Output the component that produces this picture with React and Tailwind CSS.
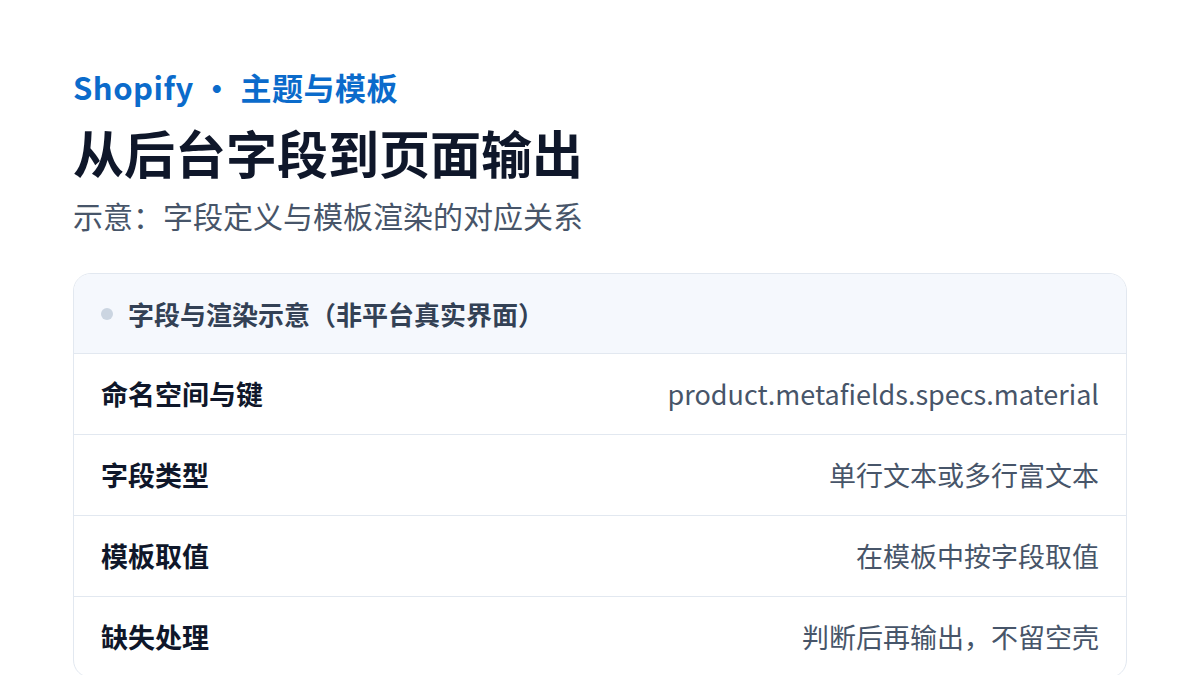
export default function App() {
  const rows = [
    ["命名空间与键", "product.metafields.specs.material"],
    ["字段类型", "单行文本或多行富文本"],
    ["模板取值", "在模板中按字段取值"],
    ["缺失处理", "判断后再输出，不留空壳"],
  ];
  return (
    <div
      className="w-[1200px] h-[675px] overflow-hidden bg-white px-[73px] pt-[64px]"
      style={{ fontFamily: '"Noto Sans CJK SC", "Noto Sans", sans-serif' }}
    >
      <div className="text-[31px] leading-[46px] font-bold text-[#0b6bcb] tracking-[0.5px]">
        Shopify · 主题与模板
      </div>
      <div className="mt-[6px] text-[51px] leading-[72px] font-bold text-[#0f172a]">
        从后台字段到页面输出
      </div>
      <div className="mt-[4px] text-[30px] leading-[46px] text-[#475569]">
        示意：字段定义与模板渲染的对应关系
      </div>
      <div className="mt-[35px] rounded-[18px] border border-[#e2e8f0] overflow-hidden">
        <div className="h-[79px] bg-[#f5f8fd] flex items-center px-[27px] gap-[15px]">
          <div className="w-[12px] h-[12px] rounded-full bg-[#cbd5e1]" />
          <div className="text-[26px] font-bold text-[#334155]">字段与渲染示意（非平台真实界面）</div>
        </div>
        {rows.map(([k, v]) => (
          <div key={k} className="h-[81px] border-t border-[#e2e8f0] flex items-center justify-between px-[27px]">
            <div className="text-[27px] font-bold text-[#0f172a]">{k}</div>
            <div className="text-[27px] text-[#475569]">{v}</div>
          </div>
        ))}
      </div>
    </div>
  );
}
